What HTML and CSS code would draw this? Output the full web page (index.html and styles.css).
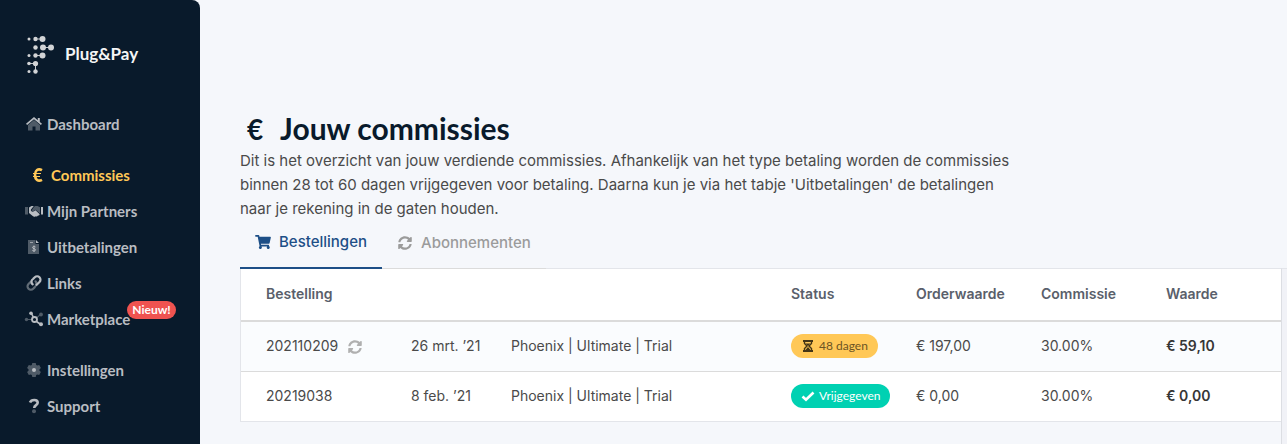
FILE: index.html
```html
<!DOCTYPE html>
<html lang="nl">
<head>
    <meta charset="UTF-8">
    <meta name="viewport" content="width=device-width, initial-scale=1.0">
    <title>Jouw commissies - Plug&amp;Pay</title>
    <link rel="stylesheet" href="styles.css">
</head>
<body>
    <svg class="sprite" aria-hidden="true">
        <symbol id="icon-sync" viewBox="0 0 512 512">
            <path d="M370.72 133.28C339.458 104.008 298.888 87.962 255.848 88c-77.458.068-144.328 53.178-162.791 126.85-1.344 5.363-6.122 9.15-11.651 9.15H24.103c-7.498 0-13.194-6.807-11.807-14.176C33.933 94.924 134.813 8 256 8c66.448 0 126.791 26.136 171.315 68.685L463.03 40.97C478.149 25.851 504 36.559 504 57.941V192c0 13.255-10.745 24-24 24H345.941c-21.382 0-32.09-25.851-16.971-40.971l41.75-41.749zM32 296h134.059c21.382 0 32.09 25.851 16.971 40.971l-41.75 41.75c31.262 29.273 71.835 45.319 114.876 45.28 77.418-.07 144.315-53.144 162.787-126.849 1.344-5.363 6.122-9.15 11.651-9.15h57.304c7.498 0 13.194 6.807 11.807 14.176C478.067 417.076 377.187 504 256 504c-66.448 0-126.791-26.136-171.315-68.685L48.97 471.03C33.851 486.149 8 475.441 8 454.059V320c0-13.255 10.745-24 24-24z"/>
        </symbol>
    </svg>

    <div class="layout">
        <aside class="sidebar">
            <a class="brand" href="#">
                <svg class="brand-logo" viewBox="0 0 30 40" aria-hidden="true">
                    <g stroke="#c4c8cc" stroke-width="1">
                        <path d="M12 5h6M19 13.500h8M12 21.500h6M5 29.500h6M11.500 30v7"/>
                    </g>
                    <g fill="#d2d4d6">
                        <circle cx="5" cy="5" r="1.500"/><circle cx="11.500" cy="5" r="2.200"/><circle cx="18.500" cy="5" r="3"/>
                        <circle cx="11.500" cy="13.500" r="2.200"/><circle cx="19" cy="13.500" r="3"/><circle cx="27" cy="13.500" r="3"/>
                        <circle cx="5" cy="21.500" r="1.500"/><circle cx="11.500" cy="21.500" r="2.200"/><circle cx="18.500" cy="21.500" r="3"/>
                        <circle cx="5" cy="29.500" r="1.800"/><circle cx="11.500" cy="29.500" r="2.600"/>
                        <circle cx="5" cy="37.500" r="1.500"/><circle cx="11.500" cy="37.500" r="2.200"/>
                    </g>
                </svg>
                <span>Plug&amp;Pay</span>
            </a>

            <nav class="menu">
                <ul>
                    <li>
                        <a href="#">
                            <svg class="icon" viewBox="0 0 20 16" aria-hidden="true">
                                <path class="dim" d="M10 4L4 9v5.500h4.500v-4h3v4H16V9z"/>
                                <path d="M10 1L2 7.800l1.100 1.300L10 3.200l6.900 5.900L18 7.800l-2.200-1.900V2h-2v2.200z"/>
                            </svg>
                            Dashboard
                        </a>
                    </li>
                </ul>
                <ul>
                    <li>
                        <a class="active" href="#">
                            <svg class="icon" viewBox="0 0 20 16" aria-hidden="true">
                                <path d="M14 3.200C10 .9 7 3.500 7 8s3 7.100 7 4.800" fill="none" stroke="currentColor" stroke-width="2.600"/>
                                <path d="M5 6.500h8M5 9.500h7" stroke="currentColor" stroke-width="1.200"/>
                            </svg>
                            Commissies
                        </a>
                    </li>
                    <li>
                        <a href="#">
                            <svg class="icon" viewBox="0 0 20 16" aria-hidden="true">
                                <path class="dim" d="M1 4h3v7.500H1zM9.500 4.500L11 3h2.500l2.500 1.200v6.300L11.500 6.800 9 8.500 7.500 7.500z"/>
                                <path d="M17 4h2v7.500h-2zM5 4.500L7.500 3h2.300L7 6.500c-.8 1.600 1.500 3 3 1.800l1.500-1 4 3.700c.5 1-.5 1.800-1.500 1.500-.5 1-1.500 1.300-2.300.7-1 .8-2.200.6-3-.2L5 10z"/>
                            </svg>
                            Mijn Partners
                        </a>
                    </li>
                    <li>
                        <a href="#">
                            <svg class="icon" viewBox="0 0 20 16" aria-hidden="true">
                                <path class="dim" d="M4 1h7.500v4H15v10H4z"/>
                                <path d="M12 1l3 3h-3zM6 3h3v.8H6z"/>
                                <path d="M11.500 8c-1-.8-3-.7-3 .6s3 .8 3 2.200-2 1.400-3.200.5M10 6.500v6.500" fill="none" stroke="currentColor"/>
                            </svg>
                            Uitbetalingen
                        </a>
                    </li>
                    <li>
                        <a href="#">
                            <svg class="icon" viewBox="0 0 20 16" aria-hidden="true">
                                <g fill="none" stroke="currentColor" stroke-width="2.200" stroke-linecap="round">
                                    <path class="dim-line" d="M7.300 6.200L4.500 9a3.300 3.300 0 0 0 4.700 4.700l1.600-1.600M11.500 6.300a3.300 3.300 0 0 1 .3 4.200"/>
                                    <path d="M12.700 9.800L15.500 7a3.300 3.300 0 0 0-4.700-4.700L9.200 3.900a3.300 3.300 0 0 0-.5 5.500"/>
                                </g>
                            </svg>
                            Links
                        </a>
                    </li>
                    <li>
                        <a href="#">
                            <svg class="icon" viewBox="0 0 20 16" aria-hidden="true">
                                <g class="dim">
                                    <circle cx="2.500" cy="8.500" r="1.700"/><circle cx="17" cy="3.500" r="1.900"/>
                                    <path d="M3 8h5v1H3zM12 6.500l4-3.300.7.900-4 3.400z"/>
                                </g>
                                <circle cx="10.500" cy="8.500" r="2.500" fill="none" stroke="currentColor" stroke-width="1.800"/>
                                <path d="M7.500 2.500l2 4M12.500 10.500l3.500 2.500" stroke="currentColor" stroke-width="1.600"/>
                                <circle cx="7" cy="2.200" r="1.800"/><circle cx="17" cy="13.300" r="2"/>
                            </svg>
                            Marketplace
                            <span class="badge-new">Nieuw!</span>
                        </a>
                    </li>
                </ul>
                <ul>
                    <li>
                        <a href="#">
                            <svg class="icon" viewBox="0 0 20 16" aria-hidden="true">
                                <path class="dim" d="M8.300 1h3.400l.5 2 1 .6 2-.6 1.700 3-1.500 1.400v1.200l1.500 1.400-1.700 3-2-.6-1 .6-.5 2H8.300l-.5-2-1-.6-2 .6-1.700-3 1.500-1.400V7.400L3.100 6l1.700-3 2 .6 1-.6z"/>
                                <circle cx="10" cy="8" r="2"/>
                            </svg>
                            Instellingen
                        </a>
                    </li>
                    <li>
                        <a href="#">
                            <svg class="icon" viewBox="0 0 20 16" aria-hidden="true">
                                <path d="M6 4.500C7.200 1.200 13.700 1 13.700 4.800c0 2.500-3.500 2.300-3.500 5.200" fill="none" stroke="currentColor" stroke-width="2.600"/>
                                <circle class="dim" cx="10" cy="13.200" r="2"/>
                            </svg>
                            Support
                        </a>
                    </li>
                </ul>
            </nav>
        </aside>

        <main class="content">
            <header class="page-header">
                <h1><span class="euro">€</span>Jouw commissies</h1>
                <p>Dit is het overzicht van jouw verdiende commissies. Afhankelijk van het type betaling worden de commissies binnen 28 tot 60 dagen vrijgegeven voor betaling. Daarna kun je via het tabje 'Uitbetalingen' de betalingen naar je rekening in de gaten houden.</p>
            </header>

            <nav class="tabs">
                <a class="tab active" href="#">
                    <svg class="tab-icon" viewBox="0 0 576 512" aria-hidden="true">
                        <path d="M528.120 301.319l47.273-208C578.806 78.301 567.391 64 551.990 64H159.208l-9.166-44.810C147.758 8.021 137.930 0 126.529 0H24C10.745 0 0 10.745 0 24v16c0 13.255 10.745 24 24 24h69.883l70.248 343.435C147.325 417.100 136 435.222 136 456c0 30.928 25.072 56 56 56s56-25.072 56-56c0-15.674-6.447-29.835-16.824-40h209.647C430.447 426.165 424 440.326 424 456c0 30.928 25.072 56 56 56s56-25.072 56-56c0-22.172-12.888-41.332-31.579-50.405l5.517-24.276c3.413-15.018-8.002-29.319-23.403-29.319H218.117l-6.545-32h293.145c11.206 0 20.920-7.754 23.403-18.681z"/>
                    </svg>
                    Bestellingen
                </a>
                <a class="tab" href="#">
                    <svg class="tab-icon"><use href="#icon-sync"/></svg>
                    Abonnementen
                </a>
            </nav>

            <div class="panels">
                <table class="orders">
                    <colgroup>
                        <col class="col-order">
                        <col class="col-date">
                        <col>
                        <col class="col-amount">
                        <col class="col-amount">
                        <col class="col-amount">
                        <col class="col-value">
                    </colgroup>
                    <thead>
                        <tr>
                            <th>Bestelling</th>
                            <th></th>
                            <th></th>
                            <th>Status</th>
                            <th>Orderwaarde</th>
                            <th>Commissie</th>
                            <th>Waarde</th>
                        </tr>
                    </thead>
                    <tbody>
                        <tr>
                            <td>202110209 <svg class="sync"><use href="#icon-sync"/></svg></td>
                            <td>26 mrt. ’21</td>
                            <td>Phoenix | Ultimate | Trial</td>
                            <td>
                                <span class="tag tag-warning">
                                    <svg class="tag-icon" viewBox="0 0 14 14" aria-hidden="true">
                                        <path d="M2 1h10v2H2zM2 11h10v2H2z"/>
                                        <path d="M3.500 3v1.500L6 7 3.500 9.500V11M10.500 3v1.500L8 7l2.500 2.500V11" fill="none" stroke="currentColor" stroke-width="1.400"/>
                                        <path d="M4.500 4.500h5L7 7zM7 8l2.500 3h-5z"/>
                                    </svg>
                                    48 dagen
                                </span>
                            </td>
                            <td>€ 197,00</td>
                            <td>30.00%</td>
                            <td class="value">€ 59,10</td>
                        </tr>
                        <tr>
                            <td>20219038</td>
                            <td>8 feb. ’21</td>
                            <td>Phoenix | Ultimate | Trial</td>
                            <td>
                                <span class="tag tag-success">
                                    <svg class="tag-icon" viewBox="0 0 14 14" aria-hidden="true">
                                        <path d="M1.500 7.500l3.500 3.300 7.500-7.300" fill="none" stroke="currentColor" stroke-width="2.600"/>
                                    </svg>
                                    Vrijgegeven
                                </span>
                            </td>
                            <td>€ 0,00</td>
                            <td>30.00%</td>
                            <td class="value">€ 0,00</td>
                        </tr>
                    </tbody>
                </table>
                <div class="side-panel"></div>
            </div>
        </main>
    </div>
</body>
</html>
```

FILE: styles.css
```css
* {
    box-sizing: border-box;
}

body {
    margin: 0;
    font-family: Inter, "Liberation Sans", sans-serif;
    font-size: 15px;
    line-height: 24px;
    color: #4a4a4a;
    background: #f5f7fb;
}

a {
    color: inherit;
    text-decoration: none;
}

ul {
    margin: 0;
    padding: 0;
    list-style: none;
}

svg {
    fill: currentColor;
    flex: none;
}

.sprite {
    display: none;
}

.layout {
    display: flex;
    min-height: 100vh;
}

/* sidebar */
.sidebar {
    width: 200px;
    flex: none;
    padding: 34px 24px 0;
    background: #091a2b;
    border-top-right-radius: 8px;
    color: #b9bdc2;
    font-family: Lato, "Liberation Sans", sans-serif;
}

.brand {
    display: flex;
    align-items: center;
    gap: 11px;
    height: 40px;
    color: #f5f5f5;
    font-size: 17px;
    font-weight: bold;
}

.brand-logo {
    width: 30px;
    height: 40px;
}

.menu {
    display: flex;
    flex-direction: column;
    gap: 15px;
    margin-top: 32px;
    font-size: 15px;
    font-weight: bold;
}

.menu a {
    display: flex;
    align-items: center;
    gap: 3px;
    height: 36px;
}

.menu a.active {
    padding-left: 4px;
    color: #ffc857;
}

.icon {
    width: 20px;
    height: 16px;
}

.dim {
    opacity: 0.4;
}

.dim-line {
    opacity: 0.5;
}

.badge-new {
    margin: -18px 0 0 -6px;
    padding: 0 5px;
    border-radius: 9px;
    background: #ef5350;
    color: #fff;
    font-size: 12px;
    line-height: 18px;
}

/* content */
.content {
    flex: 1;
    min-width: 0;
    display: flex;
    flex-direction: column;
    padding: 108px 0 0 40px;
}

.page-header h1 {
    margin: 0;
    font-family: Lato, "Liberation Sans", sans-serif;
    font-size: 30px;
    line-height: 40px;
    font-weight: bold;
    color: #091a2b;
}

.euro {
    display: inline-block;
    width: 40px;
    padding-left: 7px;
    font-size: 28px;
}

.page-header p {
    max-width: 780px;
    margin: 0;
}

.tabs {
    position: relative;
    display: flex;
    font-size: 15px;
    font-weight: 500;
    color: #9b9b9b;
}

.tab {
    display: flex;
    align-items: center;
    gap: 8px;
    height: 48px;
    padding: 0 15px 4px;
    border-bottom: 1px solid #dbdbdb;
}

.tab.active {
    border-bottom: 2px solid #1d4f87;
    color: #1d4f87;
}

.tab-icon {
    width: 16px;
    height: 14px;
}

.panels {
    flex: 1;
    display: flex;
    align-items: flex-start;
    margin-top: -1px;
}

.side-panel {
    width: 6px;
    align-self: stretch;
    border-top: 1px solid #e3e5ea;
    border-left: 1px solid #dcdee3;
    background: #f1f2f7;
}

.orders {
    flex: 1;
    table-layout: fixed;
    border-collapse: separate;
    border-spacing: 0;
    border: 1px solid #e3e5ea;
    border-right: 0;
    background: #fff;
    font-size: 14px;
    line-height: 24px;
}

.col-order {
    width: 170px;
}

.col-date {
    width: 100px;
}

.col-amount {
    width: 125px;
}

.col-value {
    width: 115px;
}

.orders th,
.orders td {
    padding: 0 0 2px;
    text-align: left;
    vertical-align: middle;
    white-space: nowrap;
}

.orders th:first-child,
.orders td:first-child {
    padding-left: 25px;
}

.orders th {
    height: 53px;
    border-bottom: 2px solid #dbdbdb;
    color: #5a5f6b;
    font-weight: 600;
}

.orders td {
    height: 50px;
    border-bottom: 1px solid #dbdbdb;
}

.orders tbody tr:first-child td {
    background: #fafcfe;
}

.orders tbody tr:last-child td {
    height: 49px;
    border-bottom: 0;
}

.orders .value {
    font-weight: 600;
    color: #363636;
}

.sync {
    width: 14px;
    height: 14px;
    margin-left: 6px;
    vertical-align: middle;
    color: #b0b0b0;
}

.tag {
    display: inline-flex;
    align-items: center;
    gap: 4px;
    height: 24px;
    padding: 0 10px;
    border-radius: 12px;
    font-family: Lato, "Liberation Sans", sans-serif;
    font-size: 12px;
    vertical-align: middle;
}

.tag-icon {
    width: 14px;
    height: 14px;
}

.tag-warning {
    background: #ffc857;
    color: #6b5424;
}

.tag-warning .tag-icon {
    color: #453616;
}

.tag-success {
    background: #00d1b2;
    color: #fff;
}
```
